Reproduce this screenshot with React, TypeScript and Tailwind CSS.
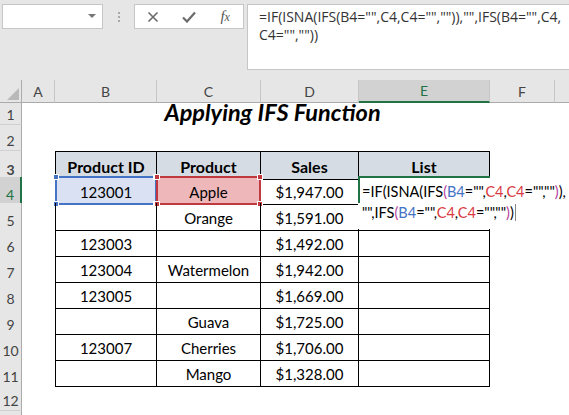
import React from "react";

const COLS = "grid grid-cols-[22px_33px_102px_104px_98px_131px_65px_1fr]";
const CELL_FONT = { fontFamily: "Lato, 'Open Sans', sans-serif" };

type Row = { n: number; b: string; c: string; d: string };
const data: Row[] = [
  { n: 4, b: "123001", c: "Apple", d: "$1,947.00" },
  { n: 5, b: "", c: "Orange", d: "$1,591.00" },
  { n: 6, b: "123003", c: "", d: "$1,492.00" },
  { n: 7, b: "123004", c: "Watermelon", d: "$1,942.00" },
  { n: 8, b: "123005", c: "", d: "$1,669.00" },
  { n: 9, b: "", c: "Guava", d: "$1,725.00" },
  { n: 10, b: "123007", c: "Cherries", d: "$1,706.00" },
  { n: 11, b: "", c: "Mango", d: "$1,328.00" },
];

function RowHead({ n, active }: { n?: number; active?: boolean }) {
  return (
    <div
      className={
        "flex items-end justify-center pb-[1px] text-[14px] leading-[16px] text-[#444] border-b border-[#d0d0d0] " +
        (active
          ? "bg-[#d2d2d2] border-r-2 border-r-[#217346] text-[#217346]"
          : "bg-[#e6e6e6] border-r border-r-[#ababab]")
      }
      style={{ fontFamily: "Lato, sans-serif" }}
    >
      {n}
    </div>
  );
}

function SelBox({ border, fill }: { border: string; fill: string }) {
  return (
    <div className={"absolute left-[-1px] top-[-1px] right-[-1px] bottom-[-1px] border-2 " + border}>
      <span className={"absolute -left-[4px] -top-[4px] w-[6px] h-[6px] border border-white " + fill} />
      <span className={"absolute -right-[4px] -top-[4px] w-[6px] h-[6px] border border-white " + fill} />
      <span className={"absolute -left-[4px] -bottom-[4px] w-[6px] h-[6px] border border-white " + fill} />
      <span className={"absolute -right-[4px] -bottom-[4px] w-[6px] h-[6px] border border-white " + fill} />
    </div>
  );
}

const B = "text-[#4472c4]";
const C = "text-[#d9393f]";
const P = "text-[#b5409a]";

export default function App() {
  return (
    <div className="w-[569px] h-[415px] overflow-hidden bg-white relative">
      {/* Toolbar */}
      <div className="h-[80px] bg-[#e6e6e6] flex items-start pt-[4px] pl-[2px]">
        <div className="w-[101px] h-[25px] shrink-0 bg-white border border-[#c6c6c6] flex items-center justify-end pr-[6px]">
          <svg width="8" height="5" viewBox="0 0 8 5"><path d="M0 0h8L4 4z" fill="#777" /></svg>
        </div>
        <div className="w-[31px] h-[25px] shrink-0 flex flex-col items-center justify-center gap-[2px]">
          <span className="w-[2px] h-[2px] bg-[#a8a8a8]" />
          <span className="w-[2px] h-[2px] bg-[#a8a8a8]" />
          <span className="w-[2px] h-[2px] bg-[#a8a8a8]" />
        </div>
        <div className="w-[110px] h-[25px] shrink-0 bg-white border border-[#c6c6c6] flex items-center">
          <div className="w-[36px] flex justify-center">
            <svg width="12" height="12" viewBox="0 0 12 12"><path d="M1.5 1.5l9 9M10.5 1.5l-9 9" stroke="#6a6a6a" strokeWidth="1.6" /></svg>
          </div>
          <div className="w-[37px] flex justify-center">
            <svg width="14" height="12" viewBox="0 0 14 12"><path d="M1 6.5l4 4L13 1.5" stroke="#6a6a6a" strokeWidth="2.2" fill="none" /></svg>
          </div>
          <div className="w-[36px] flex justify-center">
            <span className="italic text-[15px] text-[#555]" style={{ fontFamily: "'Liberation Serif', serif" }}>
              f<span className="text-[12px]">x</span>
            </span>
          </div>
        </div>
        <div className="ml-[3px] w-[330px] shrink-0 h-[66px] bg-white border border-[#c6c6c6] border-r-0">
          <div
            className="ml-[11px] mt-[3px] text-[14px] leading-[18px] text-[#333] whitespace-nowrap"
            style={{ fontFamily: "'Open Sans', 'Noto Sans', sans-serif" }}
          >
            <div>{'=IF(ISNA(IFS(B4="",C4,C4="","")),"",IFS(B4="",C4,'}</div>
            <div>{'C4="",""))'}</div>
          </div>
        </div>
      </div>

      {/* Column headers */}
      <div className={COLS + " h-[20px] text-[14px] text-[#444]"} style={{ fontFamily: "Lato, sans-serif" }}>
        <div className="bg-[#e6e6e6] border-r border-b border-[#ababab] relative">
          <svg className="absolute right-[2px] bottom-[2px]" width="12" height="12" viewBox="0 0 12 12"><path d="M12 0V12H0z" fill="#b9b9b9" /></svg>
        </div>
        {["A", "B", "C", "D"].map((l) => (
          <div key={l} className="bg-[#e6e6e6] border-r border-[#c6c6c6] border-b border-b-[#ababab] flex items-center justify-center">
            {l}
          </div>
        ))}
        <div className="bg-[#d2d2d2] border-r border-[#c6c6c6] border-b-2 border-b-[#217346] flex items-center justify-center text-[#217346]">
          E
        </div>
        <div className="bg-[#e6e6e6] border-r border-[#c6c6c6] border-b border-b-[#ababab] flex items-center justify-center">F</div>
        <div className="bg-[#e6e6e6] border-b border-b-[#ababab]" />
      </div>

      {/* Row 1 */}
      <div className={COLS + " h-[25px]"}>
        <RowHead n={1} />
        <div />
        <div
          className="col-span-4 flex items-center justify-center pt-[1px] text-[23.5px] leading-none font-bold italic text-black"
          style={CELL_FONT}
        >
          Applying IFS Function
        </div>
        <div />
        <div />
      </div>

      {/* Row 2 */}
      <div className={COLS + " h-[26px]"}>
        <RowHead n={2} />
      </div>

      {/* Row 3 header */}
      <div className={COLS + " h-[26px] text-[16px] font-bold text-black"} style={CELL_FONT}>
        <RowHead n={3} />
        <div />
        {["Product ID", "Product", "Sales", "List"].map((h, i) => (
          <div
            key={h}
            className={
              "bg-[#d6dce4] border-t border-r border-b border-black flex items-center justify-center pt-[3px] " +
              (i === 0 ? "border-l" : "")
            }
          >
            {h}
          </div>
        ))}
      </div>

      {/* Data rows */}
      {data.map((r) => (
        <div key={r.n} className={COLS + " h-[26px] text-[15px] text-black"} style={CELL_FONT}>
          <RowHead n={r.n} active={r.n === 4} />
          <div />
          <div
            className={
              "relative border-l border-r border-b border-black flex items-center justify-center pt-[4px] " +
              (r.n === 4 ? "bg-[#d9e1f2]" : "")
            }
          >
            {r.b}
            {r.n === 4 && <SelBox border="border-[#4472c4]" fill="bg-[#4472c4]" />}
          </div>
          <div
            className={
              "relative border-r border-b border-black flex items-center justify-center pt-[4px] " +
              (r.n === 4 ? "bg-[#eeb8bb]" : "")
            }
          >
            {r.c}
            {r.n === 4 && <SelBox border="border-[#c0393f]" fill="bg-[#c0393f]" />}
          </div>
          <div className="border-r border-b border-black flex items-center justify-center pt-[4px]">{r.d}</div>
          <div className="relative border-r border-b border-black">
            {r.n === 4 && (
              <>
                <div className="absolute left-[-1px] top-[-1px] z-10 w-[210px] h-[53px] bg-white">
                  <div
                    className="pl-[4px] pt-[5px] text-[14.5px] leading-[21px] text-black whitespace-nowrap"
                    style={CELL_FONT}
                  >
                    <div>
                      {"=IF(ISNA(IFS"}<span className={P}>(</span>
                      <span className={B}>B4</span>{'="",'}<span className={C}>C4</span>{","}<span className={C}>C4</span>
                      {'="",""'}<span className={P}>)</span>{"),"}
                    </div>
                    <div className="flex items-center">
                      <span>
                        {'"",IFS'}<span className={P}>(</span>
                        <span className={B}>B4</span>{'="",'}<span className={C}>C4</span>{","}<span className={C}>C4</span>
                        {'="",""'}<span className={P}>)</span>{")"}
                      </span>
                      <span className="ml-[1px] w-[1px] h-[17px] bg-[#888]" />
                    </div>
                  </div>
                </div>
                <div className="absolute left-[-1px] top-[-1px] z-20 w-[132px] h-[2px] bg-[#217346]" />
                <div className="absolute left-[-1px] top-[-1px] z-20 w-[2px] h-[27px] bg-[#217346]" />
              </>
            )}
          </div>
        </div>
      ))}

      {/* Row 12 */}
      <div className={COLS + " h-[26px]"}>
        <RowHead n={12} />
      </div>
      <div className={COLS + " h-[26px]"}>
        <RowHead />
      </div>
    </div>
  );
}
